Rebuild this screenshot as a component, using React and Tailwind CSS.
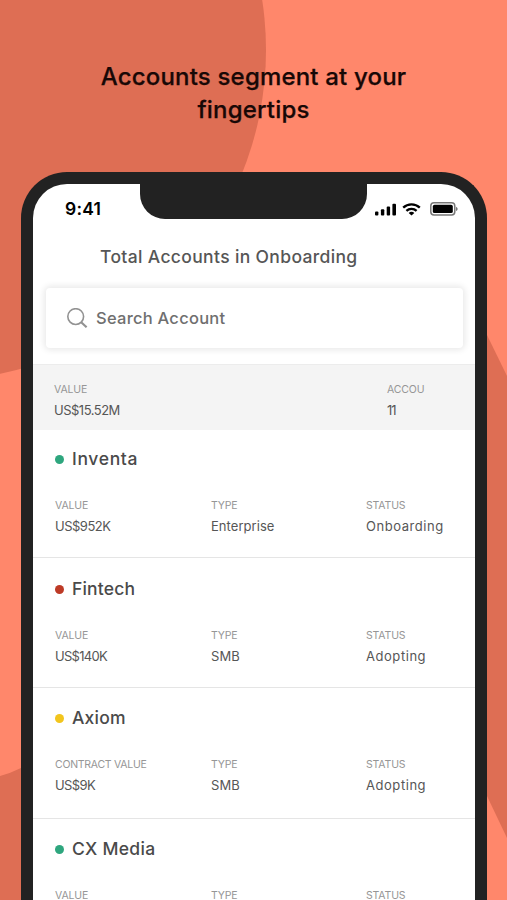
import { clsx } from "clsx";

const accounts = [
  {
    name: "Inventa",
    dot: "bg-[#2ea67e]",
    box: "h-[128px] pt-[17px]",
    nameTracking: "tracking-[0.65px]",
    valueLabel: "VALUE",
    value: "US$952K",
    valueTracking: "tracking-[-0.5px]",
    type: "Enterprise",
    status: "Onboarding",
  },
  {
    name: "Fintech",
    dot: "bg-[#bd3a26]",
    box: "h-[130px] pt-[19px]",
    nameTracking: "tracking-[0.2px]",
    valueLabel: "VALUE",
    value: "US$140K",
    valueTracking: "tracking-[-0.7px]",
    type: "SMB",
    status: "Adopting",
  },
  {
    name: "Axiom",
    dot: "bg-[#f2c51d]",
    box: "h-[131px] pt-[18px]",
    nameTracking: "tracking-[0.2px]",
    valueLabel: "CONTRACT VALUE",
    labelTracking: "tracking-[-0.27px]",
    value: "US$9K",
    valueTracking: "tracking-[-0.6px]",
    type: "SMB",
    status: "Adopting",
  },
  {
    name: "CX Media",
    dot: "bg-[#2ea67e]",
    box: "h-[82px] pt-[18px]",
    nameTracking: "tracking-[0.3px]",
    valueLabel: "VALUE",
  },
];

const Backdrop = () => (
  <svg className="absolute inset-0" width="507" height="900" viewBox="0 0 507 900" aria-hidden="true">
    <rect width="507" height="900" fill="#ff876b" />
    <circle cx="-64" cy="50" r="330" fill="#de6e54" />
    <path d="M0 776 Q11 773 21 768 L60 750 V900 H0 Z" fill="#de6e54" />
    <path d="M480 322 L487 335 L507 376 V838 L487 796 L480 780 Z" fill="#de6e54" />
  </svg>
);

const SignalIcon = () => (
  <svg width="22" height="13" viewBox="0 0 22 13" fill="#000">
    <rect x="0" y="8.4" width="3.4" height="4.1" rx="1" />
    <rect x="5.9" y="6.2" width="3.4" height="6.3" rx="1" />
    <rect x="11.7" y="3.6" width="3.4" height="8.9" rx="1" />
    <rect x="17.4" y="0.8" width="3.6" height="11.7" rx="1" />
  </svg>
);

const WifiIcon = () => (
  <svg width="19" height="13" viewBox="0 0 19 13" fill="none" stroke="#000" strokeWidth="2.3">
    <path d="M1.2 4.6 C5.8 0.3 13.2 0.3 17.8 4.6" />
    <path d="M4.4 7.9 C7.2 5.2 11.8 5.2 14.6 7.9" />
    <path d="M9.5 12.6 L6.7 9.9 C8.2 8.5 10.8 8.5 12.3 9.9 Z" fill="#000" stroke="none" />
  </svg>
);

const BatteryIcon = () => (
  <svg width="28" height="14" viewBox="0 0 28 14">
    <rect x="0.8" y="0.8" width="24" height="12.2" rx="3.2" fill="#fff" stroke="#777" strokeWidth="1.5" />
    <rect x="2.8" y="2.7" width="20" height="8.4" rx="1.7" fill="#000" />
    <path d="M26 4.8 Q27.7 5.7 27.7 6.9 Q27.7 8.1 26 9 Z" fill="#777" />
  </svg>
);

const SearchIcon = () => (
  <svg width="21" height="21" viewBox="0 0 21 21" fill="none" stroke="#929292">
    <circle cx="8.7" cy="8.6" r="7.9" strokeWidth="1.6" />
    <path d="M14.2 14.2 L19.6 19.2" strokeWidth="2.2" />
  </svg>
);

const Field = ({ label, value, width, tracking, labelTracking = "tracking-[-0.15px]" }) => (
  <div className={width}>
    <p className={clsx("h-4 text-[10.5px] leading-4 whitespace-nowrap text-[#969696]", labelTracking)}>{label}</p>
    {value && (
      <p className={clsx("mt-[3px] h-[18px] text-[13px] leading-[18px] whitespace-nowrap text-[#565656]", tracking)}>
        {value}
      </p>
    )}
  </div>
);

const AccountRow = ({ account }) => (
  <div className={clsx("shrink-0 border-b border-[#e5e5e5] pl-[22px]", account.box)}>
    <div className="flex h-6 items-center gap-2">
      <span className={clsx("h-[9px] w-[9px] rounded-full", account.dot)} />
      <h2 className={clsx("text-[17.5px] leading-6 font-medium text-[#4a4a4a]", account.nameTracking)}>
        {account.name}
      </h2>
    </div>
    <div className="mt-[27px] flex">
      <Field
        label={account.valueLabel}
        labelTracking={account.labelTracking}
        value={account.value}
        width="w-[156px]"
        tracking={account.valueTracking}
      />
      <Field label="TYPE" value={account.type} width="w-[155px]" tracking="tracking-[0.05px]" />
      <Field label="STATUS" value={account.status} width="w-[90px]" tracking="tracking-[0.55px]" />
    </div>
  </div>
);

const App = () => {
  return (
    <div className="relative h-[900px] w-[507px] overflow-hidden bg-[#ff876b] font-['Inter',sans-serif]">
      <Backdrop />
      <div className="relative flex h-full flex-col">
        <h1 className="h-[172px] shrink-0 pt-[60px] text-center text-[24px] leading-[33px] font-medium tracking-[0.18px] text-[#180806] [-webkit-text-stroke:0.25px]">
          Accounts segment at your
          <br />
          fingertips
        </h1>

        <div className="ml-[21px] h-[780px] w-[466px] shrink-0 rounded-t-[46px] border-12 border-b-0 border-[#222222] bg-white">
          <div className="flex h-full flex-col">
            <div className="flex h-[49px] shrink-0">
              <p className="w-[107px] pt-[13px] pl-[32px] text-[17.5px] leading-6 font-semibold tracking-[0.2px] text-black">
                9:41
              </p>
              <div className="h-[35px] w-[227px] rounded-b-[25px] bg-[#222222]" />
              <div className="flex h-[50px] items-center pl-2">
                <SignalIcon />
                <span className="ml-[5px]">
                  <WifiIcon />
                </span>
                <span className="ml-[9px]">
                  <BatteryIcon />
                </span>
              </div>
            </div>

            <p className="h-[55px] shrink-0 pt-[12px] pl-[67px] text-[17.5px] leading-6 font-medium tracking-[0.35px] text-[#565656]">
              Total Accounts in Onboarding
            </p>

            <div className="mr-[12px] ml-[13px] flex h-[60px] shrink-0 items-center rounded-[4px] bg-white pl-[21px] shadow-[0_0_6px_2px_rgba(0,0,0,0.09)]">
              <SearchIcon />
              <span className="ml-[8px] text-[16.5px] font-medium tracking-[0.25px] text-[#6f6f6f]">
                Search Account
              </span>
            </div>

            <div className="mt-[16px] flex h-[66px] shrink-0 border-t border-[#ececec] bg-[#f4f4f4] pt-[17px] pl-[21px]">
              <Field label="VALUE" value="US$15.52M" width="w-[333px]" tracking="tracking-[-0.5px]" />
              <Field label="ACCOU" value="11" width="w-[37px]" tracking="tracking-[-1px]" />
            </div>

            {accounts.map((account) => (
              <AccountRow key={account.name} account={account} />
            ))}
          </div>
        </div>
      </div>
    </div>
  );
};

export default App;
